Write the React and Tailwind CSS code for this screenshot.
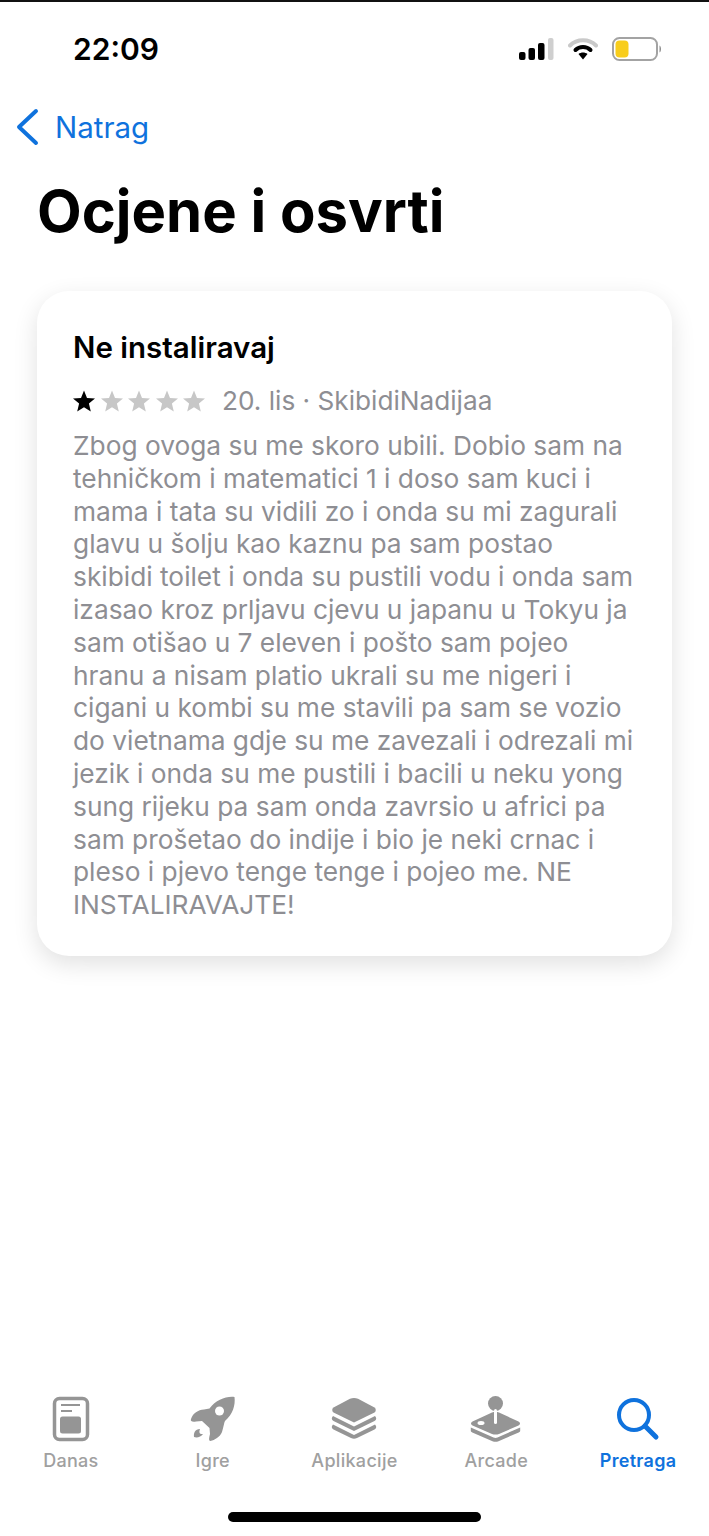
import React from 'react';

const lines = [
  'Zbog ovoga su me skoro ubili. Dobio sam na',
  'tehničkom i matematici 1 i doso sam kuci i',
  'mama i tata su vidili zo i onda su mi zagurali',
  'glavu u šolju kao kaznu pa sam postao',
  'skibidi toilet i onda su pustili vodu i onda sam',
  'izasao kroz prljavu cjevu u japanu u Tokyu ja',
  'sam otišao u 7 eleven i pošto sam pojeo',
  'hranu a nisam platio ukrali su me nigeri i',
  'cigani u kombi su me stavili pa sam se vozio',
  'do vietnama gdje su me zavezali i odrezali mi',
  'jezik i onda su me pustili i bacili u neku yong',
  'sung rijeku pa sam onda zavrsio u africi pa',
  'sam prošetao do indije i bio je neki crnac i',
  'pleso i pjevo tenge tenge i pojeo me. NE',
  'INSTALIRAVAJTE!',
];

const StatusIcons = () => (
  <div className="flex items-center gap-[14px]">
    <svg width="36" height="24" viewBox="0 0 36 24">
      <rect x="1" y="15" width="6.500" height="8" rx="2" fill="#000" />
      <rect x="10.500" y="11" width="6.500" height="12" rx="2" fill="#000" />
      <rect x="20" y="6" width="6.500" height="17" rx="2" fill="#000" />
      <rect x="30" y="1" width="5.500" height="22" rx="2" fill="#cfcfcf" />
    </svg>
    <svg width="30" height="24" viewBox="0 0 30 24">
      <path d="M2 8.500 C9 1.500 21 1.500 28 8.500" fill="none" stroke="#c9c9c9" strokeWidth="4" strokeLinecap="round" />
      <path d="M7.500 13 C11.500 9 18.500 9 22.500 13" fill="none" stroke="#000" strokeWidth="4" strokeLinecap="round" />
      <path d="M10.500 17 C13 15 17 15 19.500 17 L15 22.500 Z" fill="#000" />
    </svg>
    <svg width="50" height="26" viewBox="0 0 50 26">
      <rect x="1" y="2" width="44" height="22" rx="6.500" fill="#fff" stroke="#a3a3a3" strokeWidth="2" />
      <rect x="3.500" y="4.500" width="13" height="17" rx="4" fill="#f8cd1c" />
      <path d="M47.500 9.500 C49.500 10.500 49.500 15.500 47.500 16.500 Z" fill="#8e8e8e" />
    </svg>
  </div>
);

const Star = ({ color }) => (
  <svg width="24" height="24" viewBox="0 0 24 24">
    <path
      d="M12 1.500l3 7.400 8 .6-6.100 5.100 1.900 7.800L12 18.200 5.200 22.400l1.900-7.800L1 9.500l8-.6z"
      fill={color}
    />
  </svg>
);

const DanasIcon = () => (
  <svg width="38" height="46" viewBox="0 0 38 46">
    <rect x="2.500" y="2.500" width="33" height="41" rx="5" fill="none" stroke="#959595" strokeWidth="3.500" />
    <rect x="9" y="8" width="19" height="2" fill="#959595" />
    <rect x="9" y="14" width="11" height="2" fill="#959595" />
    <rect x="8" y="20.500" width="21" height="17" rx="2.500" fill="#959595" />
  </svg>
);

const IgreIcon = () => (
  <svg width="46" height="46" viewBox="0 0 46 46">
    <path
      d="M44.500 1 C45.500 9 43 18 35 25 C34 27 33.500 31 32 36 C30 41 24.500 44 20.500 45 C18.500 45 19 42 20 38 L19.500 32 L12 25 L6 25.500 C2.500 26 0 25.500 1 23 C3 17 8 14 14 13.500 L19.500 12.500 C26 4 36 0 44.500 1 Z"
      fill="#959595"
    />
    <circle cx="29.500" cy="15" r="4.500" fill="#fff" />
    <path d="M10 33 C5 33 3.500 37 4 41 C7 42 11 41 13 38 C10 38.500 8.500 37 10 33 Z" fill="#959595" />
  </svg>
);

const AplikacijeIcon = () => (
  <svg width="46" height="44" viewBox="0 0 46 44">
    <path d="M23 25.500 L2.500 15.500 C0.800 14.500 0.800 11.500 2.500 10.500 L19 1.800 C21.500 0.600 24.500 0.600 27 1.800 L43.500 10.500 C45.200 11.500 45.200 14.500 43.500 15.500 Z" fill="#959595" />
    <path d="M2 19 L1 20.500 C0.500 22 1 23 2.500 24 L23 34 L43.500 24 C45 23 45.500 22 45 20.500 L44 19 L23 29.500 Z" fill="#959595" />
    <path d="M2 27.500 L1 29 C0.500 30.500 1 31.500 2.500 32.500 L20 41 C22 42 24 42 26 41 L43.500 32.500 C45 31.500 45.500 30.500 45 29 L44 27.500 L23 38 Z" fill="#959595" />
  </svg>
);

const ArcadeIcon = () => (
  <svg width="52" height="46" viewBox="0 0 52 46">
    <circle cx="25.500" cy="7.500" r="7.500" fill="#959595" />
    <path d="M22 16.500 C24 15.500 27 15.500 29 16.500 L48.500 25.500 C50.500 26.500 50.500 28.500 48.500 29.500 L29 38 C27 38.800 24 38.800 22 38 L2.500 29.500 C0.500 28.500 0.500 26.500 2.500 25.500 Z" fill="#959595" />
    <rect x="24" y="13" width="3" height="15" rx="1.500" fill="#fff" />
    <ellipse cx="11" cy="27" rx="3.500" ry="2" fill="#fff" />
    <path d="M0.800 31.500 L23.500 41.500 C24.800 42 26.200 42 27.500 41.500 L50.200 31.500 V34.500 C50.200 35.500 49.700 36 48.700 36.500 L28.500 45.200 C26.500 46 24.500 46 22.500 45.200 L2.300 36.500 C1.300 36 0.800 35.500 0.800 34.500 Z" fill="#959595" />
  </svg>
);

const PretragaIcon = () => (
  <svg width="44" height="44" viewBox="0 0 44 44">
    <circle cx="18" cy="18" r="15" fill="none" stroke="#0f72dd" strokeWidth="4" />
    <path d="M29 29 L40 40" fill="none" stroke="#0f72dd" strokeWidth="5" strokeLinecap="round" />
  </svg>
);

const TabItem = ({ icon, label, active }) => (
  <div className="flex flex-col items-center w-[142px]">
    <div className="h-[46px] flex items-center justify-center">{icon}</div>
    <span className={`mt-[7px] text-[18px] leading-[24px] tracking-[0.3px] ${active ? 'font-semibold text-[#0f72dd]' : 'font-medium text-[#a0a0a0]'}`}>
      {label}
    </span>
  </div>
);

export default function App() {
  return (
    <div className="w-[709px] h-[1536px] bg-white flex flex-col overflow-hidden font-['Inter',sans-serif]">
      {/* Top edge */}
      <div className="h-[2px] bg-[#111111]" />

      {/* Status bar */}
      <div className="h-[66px] pt-[27px] pl-[73px] pr-[47px] flex items-start justify-between">
        <span className="text-[30px] leading-[40px] font-semibold text-black">22:09</span>
        <div className="pt-[7px]">
          <StatusIcons />
        </div>
      </div>

      {/* Nav */}
      <div className="mt-[37px] pl-[16px] h-[44px] flex items-center">
        <svg width="24" height="38" viewBox="0 0 24 38">
          <path d="M20 3 L3 19 L20 35" fill="none" stroke="#0f72dd" strokeWidth="4" strokeLinecap="round" strokeLinejoin="round" />
        </svg>
        <span className="ml-[15px] text-[29.500px] leading-[40px] text-[#0f72dd]">Natrag</span>
      </div>

      <h1 className="mt-[27px] pl-[37px] text-[58px] leading-[70px] font-bold text-black">Ocjene i osvrti</h1>

      {/* Review card */}
      <div className="mt-[45px] mx-[37px] h-[665px] rounded-[32px] bg-white shadow-[0_8px_24px_rgba(0,0,0,0.12)] pt-[38px] pl-[36px]">
        <h2 className="text-[29.500px] leading-[36px] font-semibold text-black">Ne instaliravaj</h2>
        <div className="mt-[18px] -ml-[1px] flex items-center h-[36px]">
          <div className="flex gap-[3.500px]">
            <Star color="#000000" />
            <Star color="#c7c7c7" />
            <Star color="#c7c7c7" />
            <Star color="#c7c7c7" />
            <Star color="#c7c7c7" />
          </div>
          <span className="ml-[16px] text-[26.200px] leading-[36px] text-[#8e8e93]">20. lis · SkibidiNadijaa</span>
        </div>
        <p className="mt-[11px] text-[26.300px] leading-[32.800px] text-[#8e8e93] whitespace-nowrap">
          {lines.map((line) => (
            <span key={line} className="block">{line}</span>
          ))}
        </p>
      </div>

      {/* Tab bar */}
      <div className="mt-auto pb-[14px] flex flex-col items-center">
        <div className="flex w-full justify-center">
          <TabItem icon={<DanasIcon />} label="Danas" />
          <TabItem icon={<IgreIcon />} label="Igre" />
          <TabItem icon={<AplikacijeIcon />} label="Aplikacije" />
          <TabItem icon={<ArcadeIcon />} label="Arcade" />
          <TabItem icon={<PretragaIcon />} label="Pretraga" active />
        </div>
        <div className="mt-[39px] w-[253px] h-[10px] rounded-full bg-black" />
      </div>
    </div>
  );
}
